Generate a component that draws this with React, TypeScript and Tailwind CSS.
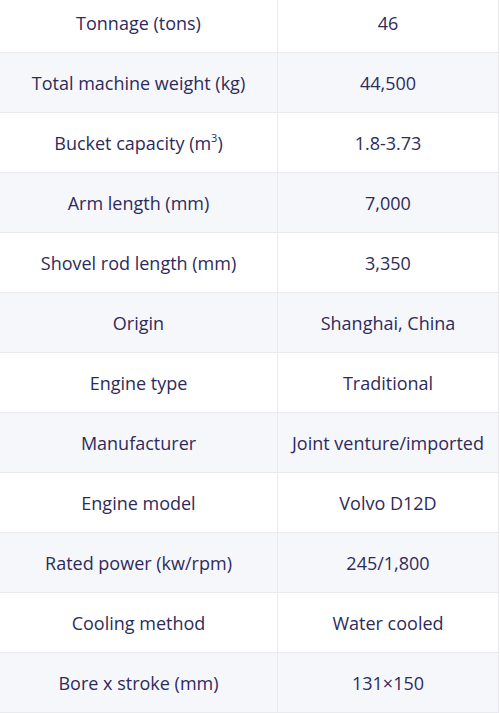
const rows: [React.ReactNode, string][] = [
  ['Tonnage (tons)', '46'],
  ['Total machine weight (kg)', '44,500'],
  [
    <>
      Bucket capacity (m<sup className="text-[11px] align-super">3</sup>)
    </>,
    '1.8-3.73',
  ],
  ['Arm length (mm)', '7,000'],
  ['Shovel rod length (mm)', '3,350'],
  ['Origin', 'Shanghai, China'],
  ['Engine type', 'Traditional'],
  ['Manufacturer', 'Joint venture/imported'],
  ['Engine model', 'Volvo D12D'],
  ['Rated power (kw/rpm)', '245/1,800'],
  ['Cooling method', 'Water cooled'],
  ['Bore x stroke (mm)', '131×150'],
];

export default function App() {
  return (
    <div className="w-[500px] h-[713px] overflow-hidden bg-white font-['Open_Sans',sans-serif] text-[18px] text-[#2e2b5c]">
      <div className="mt-[-7px] w-[499px] border-r border-[#e9e9ef]">
        {rows.map(([label, value], i) => (
          <div
            key={i}
            className={`grid grid-cols-[278px_220px] h-[60px] border-b border-[#e9e9ef] ${
              i % 2 === 1 ? 'bg-[#f6f7fb]' : 'bg-white'
            }`}
          >
            <div className="flex items-center justify-center pt-[1px] border-r border-[#e9e9ef]">{label}</div>
            <div className="flex items-center justify-center pt-[1px]">{value}</div>
          </div>
        ))}
      </div>
    </div>
  );
}
